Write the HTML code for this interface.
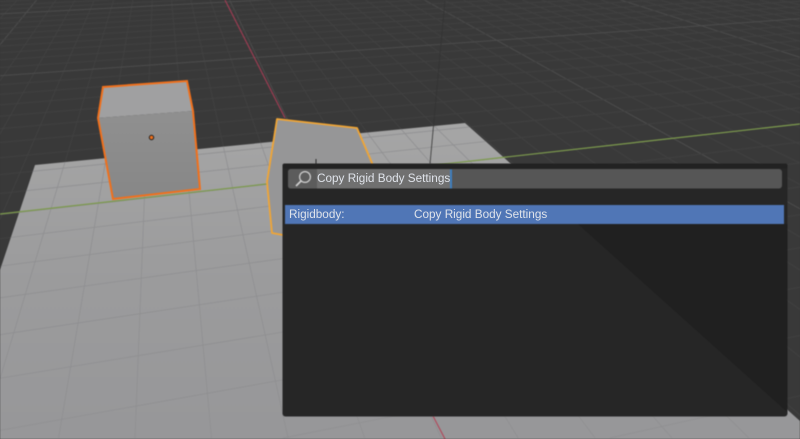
<!DOCTYPE html>
<html>
<head>
<meta charset="utf-8">
<style>
html,body{margin:0;padding:0;width:800px;height:439px;overflow:hidden;background:#393939;}
#root{position:relative;width:800px;height:439px;overflow:hidden;background:#393939;font-family:"Liberation Sans",sans-serif;}
#scene{position:absolute;left:0;top:0;filter:blur(0.6px);}
.abs{position:absolute;}
.t{position:absolute;font-size:11.75px;line-height:14px;color:#dfe3ea;white-space:nowrap;filter:blur(0.35px);}
</style>
</head>
<body>
<div id="root">
<svg id="scene" width="800" height="439" viewBox="0 0 800 439" xmlns="http://www.w3.org/2000/svg">
  <defs>
    <clipPath id="pc"><polygon points="35,165 465,123 800,421 800,439 0,439 0,270"/></clipPath>
    <linearGradient id="fr" x1="0" y1="0" x2="0" y2="1">
      <stop offset="0" stop-color="#909090"/><stop offset="1" stop-color="#878787"/>
    </linearGradient>
    <linearGradient id="pl" gradientUnits="userSpaceOnUse" x1="0" y1="123" x2="0" y2="439">
      <stop offset="0" stop-color="#a6a6a6"/><stop offset="0.45" stop-color="#9c9c9d"/><stop offset="1" stop-color="#979799"/>
    </linearGradient>
  </defs>
  <rect width="800" height="439" fill="#393939"/>
  <g id="dark" stroke="#414141" stroke-width="1" fill="none"></g>
  <polygon points="35,165 465,123 800,421 800,439 0,439 0,270" fill="url(#pl)"/>
  <g id="plane" clip-path="url(#pc)" stroke="#8f8f91" stroke-width="0.8" fill="none"></g>
  <line x1="445" y1="0" x2="430" y2="164" stroke="#333333" stroke-width="0.8"/>
  <line x1="0" y1="214" x2="800" y2="124" stroke="#7c9a4c" stroke-width="1.2"/>
  <line x1="225" y1="0" x2="285" y2="118" stroke="#9c3c52" stroke-width="1.2"/>
  <line x1="433" y1="416" x2="445" y2="439" stroke="#b04a5c" stroke-width="1.2"/>

  <polygon points="103,87 187,81 193,111 98,118" fill="#a0a0a1"/>
  <polygon points="98,118 193,111 200,189 113,199" fill="url(#fr)"/>
  <polygon points="103,87 187,81 193,111 200,189 113,199 98,118" fill="none" stroke="#f0701c" stroke-width="2"/>
  <circle cx="151.500" cy="137.500" r="2.200" fill="#f0701c" stroke="#1f1f1f" stroke-width="1"/>

  <polygon points="277,119 357,128 372,163 372,240 283,235 272,233 267,182" fill="#969697" stroke="#f0a535" stroke-width="1.800" stroke-linejoin="round"/>
  <line x1="316" y1="159" x2="316" y2="165" stroke="#2a2a2a" stroke-width="1"/>
</svg>

<svg class="abs" style="left:0;top:0;filter:blur(0.4px)" width="800" height="439" viewBox="0 0 800 439" xmlns="http://www.w3.org/2000/svg">
  <rect x="282.500" y="163.500" width="505" height="253" rx="3" fill="#262626"/>
  <polygon points="578,224 784,224 787.500,224 787.500,412 785,410" fill="#202020"/>
  <rect x="282.500" y="163.500" width="505" height="5" rx="2" fill="#222222"/>
  <rect x="288" y="169" width="494" height="19.500" rx="3" fill="#565656"/>
  <path d="M291,169 H317 V188.500 H291 Q288,188.500 288,185.500 V172 Q288,169 291,169 Z" fill="#5c5c5c"/>
  <rect x="317" y="169" width="133" height="19.500" fill="#707070"/>
  <rect x="450" y="169.500" width="2" height="19" fill="#3d7fc0"/>
  <rect x="285" y="205" width="499" height="19" fill="#5076b6"/>
  <circle cx="305" cy="177" r="5.400" fill="none" stroke="#d0d0d0" stroke-width="1.200"/>
  <line x1="301" y1="181" x2="296.500" y2="185.500" stroke="#d0d0d0" stroke-width="1.700" stroke-linecap="round"/>
</svg>

<div class="t" style="left:317px;top:172px;">Copy Rigid Body Settings</div>
<div class="t" style="left:289px;top:208px;">Rigidbody:</div>
<div class="t" style="left:414px;top:208px;">Copy Rigid Body Settings</div>
</div>
<script>
(function(){
  var NS="http://www.w3.org/2000/svg";
  var V1=[158,-148],V2=[3300,-160];
  function add(g,a,b,extra){
    var l=document.createElementNS(NS,"line");
    l.setAttribute("x1",a[0]);l.setAttribute("y1",a[1]);
    l.setAttribute("x2",b[0]);l.setAttribute("y2",b[1]);
    if(extra){l.setAttribute("stroke",extra);}
    g.appendChild(l);
  }
  function fam1(i){
    var inv=3.351e-4+i*4.55e-6;
    if(inv<=0) return null;
    var x=3300-1/inv;
    var y=214-0.113*x;
    var s=(x-V1[0])/(y-V1[1]);
    return [[V1[0]+s*(0-V1[1]),0],[V1[0]+s*(438-V1[1]),438]];
  }
  function fam2(k){
    var inv=2.893e-3-k*0.18e-3;
    if(inv<=0) return null;
    var y=1/inv-148;
    var s=(V2[1]-y)/(V2[0]-150);
    var a=[0,y+s*(-150)],b=[800,y+s*650];
    if(b[1]>=438) return null;
    if(a[1]>438){a=[(438-b[1])/s+800,438];}
    return [a,b];
  }
  var d=document.getElementById("dark"),p=document.getElementById("plane");
  for(var i=-60;i<=200;i++){
    var L=fam1(i); if(!L) continue;
    add(d,L[0],L[1],(i%10===0)?"#4c4c4c":"#414141");
    if(i>=-12&&i<=12) add(p,L[0],L[1]);
  }
  for(var k=-30;k<=14;k++){
    var M=fam2(k); if(!M) continue;
    add(d,M[0],M[1],(k%10===0)?"#4c4c4c":"#414141");
    if(k>=-3) add(p,M[0],M[1]);
  }
})();
</script>
</body>
</html>
